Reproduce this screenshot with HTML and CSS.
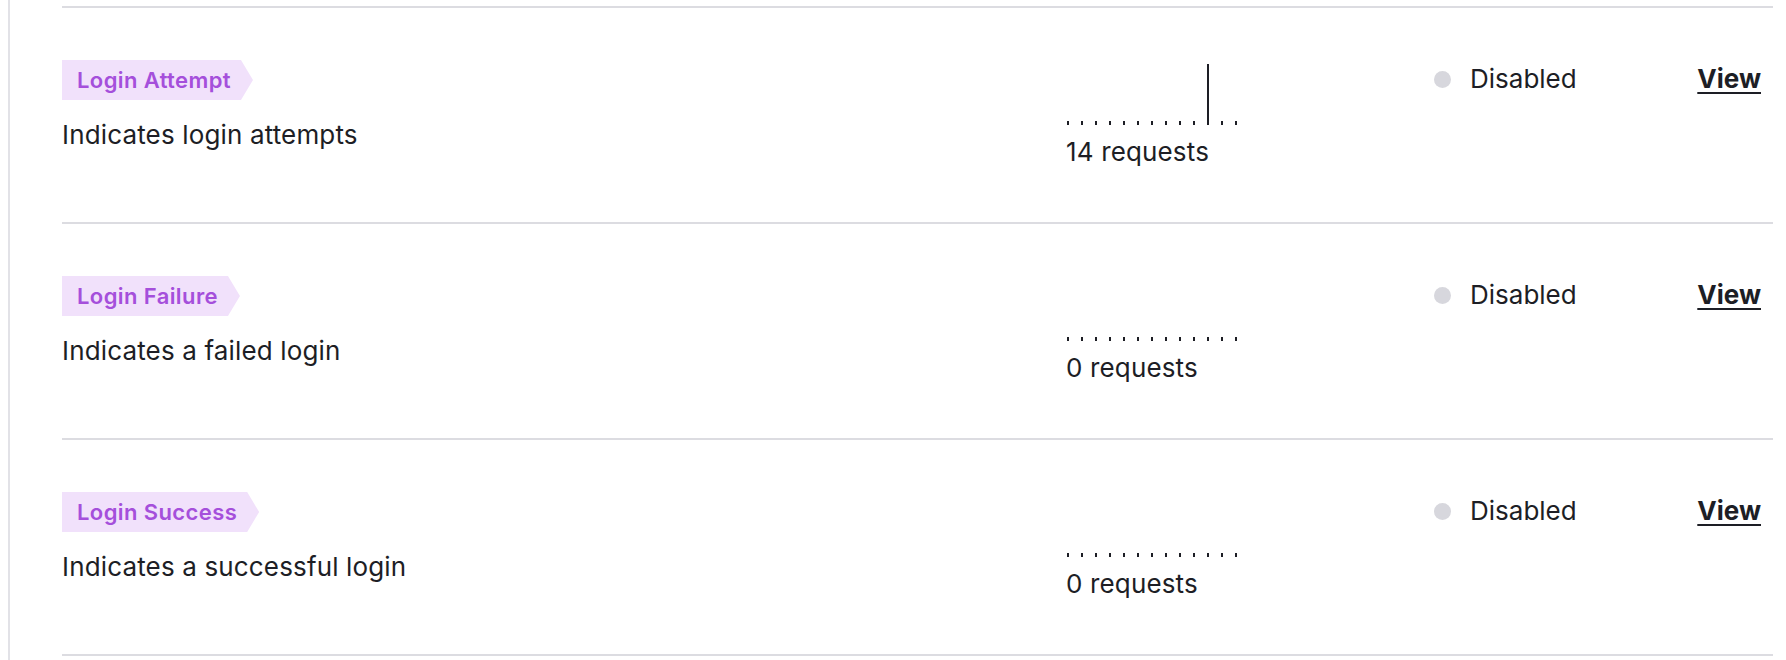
FILE: index.html
```html
<!DOCTYPE html>
<html lang="en">
<head>
<meta charset="utf-8">
<title>Events</title>
<link rel="stylesheet" href="styles.css">
</head>
<body>
<div class="page">
  <div class="list">
    <div class="row">
      <div class="info">
        <span class="badge">Login Attempt</span>
        <p class="desc">Indicates login attempts</p>
      </div>
      <div class="usage">
        <svg class="spark" width="172" height="66" viewBox="0 0 172 66">
          <rect x="1" y="61" width="2" height="4"/><rect x="15" y="61" width="2" height="4"/><rect x="29" y="61" width="2" height="4"/><rect x="43" y="61" width="2" height="4"/><rect x="57" y="61" width="2" height="4"/><rect x="71" y="61" width="2" height="4"/><rect x="85" y="61" width="2" height="4"/><rect x="99" y="61" width="2" height="4"/><rect x="113" y="61" width="2" height="4"/><rect x="127" y="61" width="2" height="4"/><rect x="141" y="4" width="2" height="61"/><rect x="155" y="61" width="2" height="4"/><rect x="169" y="61" width="2" height="4"/>
        </svg>
        <div class="count">14 requests</div>
      </div>
      <div class="status"><span class="dot"></span>Disabled</div>
      <a class="view" href="#">View</a>
    </div>
    <div class="row">
      <div class="info">
        <span class="badge">Login Failure</span>
        <p class="desc">Indicates a failed login</p>
      </div>
      <div class="usage">
        <svg class="spark" width="172" height="66" viewBox="0 0 172 66">
          <rect x="1" y="61" width="2" height="4"/><rect x="15" y="61" width="2" height="4"/><rect x="29" y="61" width="2" height="4"/><rect x="43" y="61" width="2" height="4"/><rect x="57" y="61" width="2" height="4"/><rect x="71" y="61" width="2" height="4"/><rect x="85" y="61" width="2" height="4"/><rect x="99" y="61" width="2" height="4"/><rect x="113" y="61" width="2" height="4"/><rect x="127" y="61" width="2" height="4"/><rect x="141" y="61" width="2" height="4"/><rect x="155" y="61" width="2" height="4"/><rect x="169" y="61" width="2" height="4"/>
        </svg>
        <div class="count">0 requests</div>
      </div>
      <div class="status"><span class="dot"></span>Disabled</div>
      <a class="view" href="#">View</a>
    </div>
    <div class="row">
      <div class="info">
        <span class="badge">Login Success</span>
        <p class="desc">Indicates a successful login</p>
      </div>
      <div class="usage">
        <svg class="spark" width="172" height="66" viewBox="0 0 172 66">
          <rect x="1" y="61" width="2" height="4"/><rect x="15" y="61" width="2" height="4"/><rect x="29" y="61" width="2" height="4"/><rect x="43" y="61" width="2" height="4"/><rect x="57" y="61" width="2" height="4"/><rect x="71" y="61" width="2" height="4"/><rect x="85" y="61" width="2" height="4"/><rect x="99" y="61" width="2" height="4"/><rect x="113" y="61" width="2" height="4"/><rect x="127" y="61" width="2" height="4"/><rect x="141" y="61" width="2" height="4"/><rect x="155" y="61" width="2" height="4"/><rect x="169" y="61" width="2" height="4"/>
        </svg>
        <div class="count">0 requests</div>
      </div>
      <div class="status"><span class="dot"></span>Disabled</div>
      <a class="view" href="#">View</a>
    </div>
  </div>
</div>
</body>
</html>
```
FILE: styles.css
```css
* { box-sizing: border-box; }

html, body {
  margin: 0;
  background: #ffffff;
}

body {
  font-family: Inter, "Noto Sans", sans-serif;
  color: #1d1e25;
  font-size: 26px;
  letter-spacing: 0.15px;
}

.page {
  margin-left: 8px;
  border-left: 2px solid #e2e2e7;
  padding: 6px 0 0 52px;
  min-height: 660px;
}

.list {
  width: 1711px;
  border-bottom: 2px solid #dcdce1;
}

.row {
  display: grid;
  grid-template-columns: 1004px 368px 1fr auto;
  align-items: start;
  height: 216px;
  padding: 52px 12px 0 0;
  border-top: 2px solid #dcdce1;
}

.info {
  display: flex;
  flex-direction: column;
  align-items: flex-start;
}

.badge {
  display: inline-flex;
  align-items: center;
  height: 40px;
  padding: 0 22px 0 15px;
  background: #f1e1fb;
  color: #a54fdb;
  font-size: 22px;
  font-weight: 600;
  letter-spacing: 0.4px;
  clip-path: polygon(0 0, calc(100% - 12px) 0, 100% 50%, calc(100% - 12px) 100%, 0 100%);
}

.desc {
  margin: 16px 0 0;
  line-height: 37px;
}

.usage {
  display: flex;
  flex-direction: column;
}

.spark {
  display: block;
  fill: #1d1e25;
}

.count {
  margin-top: 11px;
  line-height: 30px;
}

.status {
  display: flex;
  align-items: center;
  gap: 19px;
  line-height: 38px;
  letter-spacing: 0;
}

.dot {
  width: 17px;
  height: 17px;
  border-radius: 50%;
  background: #d7d7dd;
}

.view {
  color: #1d1e25;
  font-weight: 700;
  line-height: 38px;
  letter-spacing: 0;
  text-decoration: underline;
  text-decoration-thickness: 2px;
  text-underline-offset: 4px;
}
```
